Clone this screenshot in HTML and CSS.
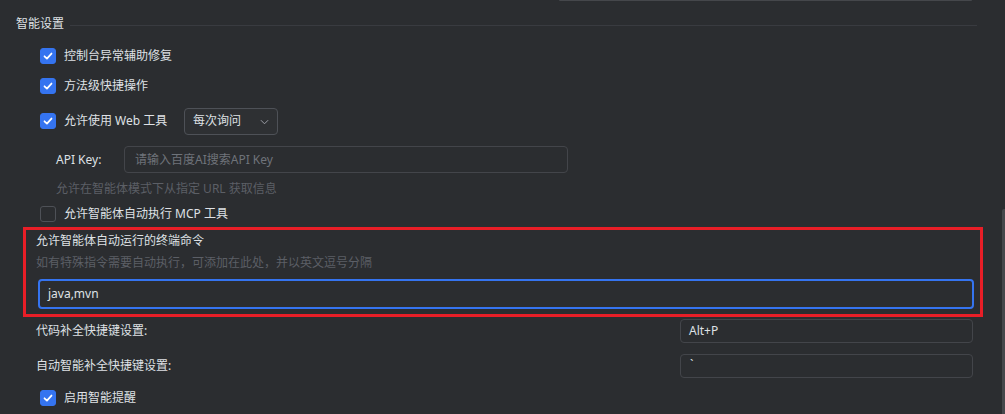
FILE: index.html
```html
<!DOCTYPE html>
<html lang="zh">
<head>
<meta charset="utf-8">
<link rel="stylesheet" href="styles.css">
</head>
<body>
<div class="page">
  <div class="top-edge"></div>
  <div class="section-head"><span>智能设置</span><div class="rule"></div></div>

  <div class="row cb-row r1">
    <span class="cb checked"><svg viewBox="0 0 16 16"><path d="M4 8.3 L6.8 11 L12 5.2" fill="none" stroke="#fff" stroke-width="2" stroke-linecap="round" stroke-linejoin="round"/></svg></span>
    <span class="label">控制台异常辅助修复</span>
  </div>
  <div class="row cb-row r2">
    <span class="cb checked"><svg viewBox="0 0 16 16"><path d="M4 8.3 L6.8 11 L12 5.2" fill="none" stroke="#fff" stroke-width="2" stroke-linecap="round" stroke-linejoin="round"/></svg></span>
    <span class="label">方法级快捷操作</span>
  </div>
  <div class="row cb-row r3">
    <span class="cb checked"><svg viewBox="0 0 16 16"><path d="M4 8.3 L6.8 11 L12 5.2" fill="none" stroke="#fff" stroke-width="2" stroke-linecap="round" stroke-linejoin="round"/></svg></span>
    <span class="label web-label">允许使用 Web 工具</span>
    <div class="select"><span>每次询问</span><svg class="chev" viewBox="0 0 10 6"><path d="M1 1 L5 5 L9 1" fill="none" stroke="#9da0a8" stroke-width="1.1"/></svg></div>
  </div>
  <div class="row api-row">
    <span class="api-label">API Key:</span>
    <div class="input api-input"><span class="placeholder">请输入百度AI搜索API Key</span></div>
  </div>
  <div class="row hint-row"><span class="hint">允许在智能体模式下从指定 URL 获取信息</span></div>
  <div class="row cb-row r-mcp">
    <span class="cb"></span>
    <span class="label">允许智能体自动执行 MCP 工具</span>
  </div>

  <div class="highlight">
    <div class="hl-title">允许智能体自动运行的终端命令</div>
    <div class="hl-hint">如有特殊指令需要自动执行，可添加在此处，并以英文逗号分隔</div>
    <div class="focus-input"><span>java,mvn</span></div>
  </div>

  <div class="row key-row k1">
    <span class="label">代码补全快捷键设置:</span>
    <div class="input key-input"><span>Alt+P</span></div>
  </div>
  <div class="row key-row k2">
    <span class="label">自动智能补全快捷键设置:</span>
    <div class="input key-input tick"><span>`</span></div>
  </div>
  <div class="row cb-row r-last">
    <span class="cb checked"><svg viewBox="0 0 16 16"><path d="M4 8.3 L6.8 11 L12 5.2" fill="none" stroke="#fff" stroke-width="2" stroke-linecap="round" stroke-linejoin="round"/></svg></span>
    <span class="label">启用智能提醒</span>
  </div>

  <div class="scrollbar"></div>
</div>
</body>
</html>
```

FILE: styles.css
```css
* { box-sizing: border-box; }
html, body {
  margin: 0;
  padding: 0;
  background: #2b2d30;
}
body {
  width: 1005px;
  height: 414px;
  overflow: hidden;
  font-family: "Noto Sans", "Noto Sans CJK SC", sans-serif;
  font-size: 12px;
  color: #dfe1e5;
}
.page {
  position: relative;
  width: 1005px;
  height: 414px;
  display: flex;
  flex-direction: column;
}
.top-edge {
  margin-left: 559px;
  width: 413px;
  height: 1px;
  background: #45474b;
  border-radius: 0 0 2px 2px;
}
.section-head {
  margin-top: 14px;
  height: 18px;
  padding-left: 16px;
  padding-right: 28px;
  display: flex;
  align-items: center;
  line-height: 18px;
}
.section-head .rule {
  flex: 1;
  height: 1px;
  background: #393b40;
  margin-left: 6px;
  margin-top: 2px;
}
.row {
  display: flex;
  align-items: center;
  line-height: 18px;
}
.cb-row { padding-left: 40px; }
.cb {
  width: 16px;
  height: 16px;
  border-radius: 3px;
  border: 1px solid #4e5157;
  flex: none;
  margin-right: 8px;
  display: flex;
}
.cb.checked {
  background: #3574f0;
  border-color: #3574f0;
}
.cb svg { width: 14px; height: 14px; }
.r1 { margin-top: 8px; height: 30px; }
.r2 { height: 30px; }
.r3 { margin-top: 4px; height: 32px; }
.web-label { width: 108px; }
.select {
  margin-left: 12px;
  width: 94px;
  height: 27px;
  border: 1px solid #4e5157;
  border-radius: 4px;
  background: #2e3033;
  display: flex;
  align-items: center;
  justify-content: space-between;
  padding: 0 8px 0 8px;
}
.chev { width: 9px; height: 6px; margin-top: 1px; }
.api-row {
  margin-top: 9px;
  height: 27px;
  padding-left: 56px;
}
.api-label { width: 68px; }
.input {
  height: 26px;
  border: 1px solid #43454a;
  border-radius: 4px;
  display: flex;
  align-items: center;
  padding-left: 10px;
}
.api-input { width: 444px; height: 27px; }
.placeholder { color: #6f737a; }
.hint-row {
  margin-top: 6px;
  height: 20px;
  padding-left: 56px;
}
.hint { color: #5c5f66; }
.r-mcp { margin-top: 3px; height: 24px; }
.highlight {
  margin-top: 1px;
  margin-left: 23px;
  width: 960px;
  height: 90px;
  border: 3px solid #e81e27;
  padding: 2px 6px 0 10px;
  display: flex;
  flex-direction: column;
}
.hl-title { height: 18px; line-height: 18px; }
.hl-hint { margin-top: 4px; height: 18px; line-height: 18px; color: #5c5f66; }
.focus-input {
  margin-top: 7px;
  margin-left: 2px;
  height: 30px;
  border: 2px solid #3574f0;
  border-radius: 4px;
  display: flex;
  align-items: center;
  padding-left: 8px;
  line-height: 18px;
}
.key-row {
  padding-left: 36px;
  height: 24px;
  padding-right: 32px;
  justify-content: space-between;
}
.k1 { margin-top: 2px; }
.k2 { margin-top: 11px; }
.key-input {
  width: 293px;
  height: 24px;
  padding-left: 8px;
}
.key-input.tick { align-items: flex-start; padding-top: 1px; padding-left: 9px; }
.r-last { margin-top: 8px; height: 24px; }
.scrollbar {
  position: absolute;
  right: 0;
  top: 209px;
  width: 3px;
  height: 205px;
  background: #45474b;
  border-radius: 2px 0 0 0;
}
```
